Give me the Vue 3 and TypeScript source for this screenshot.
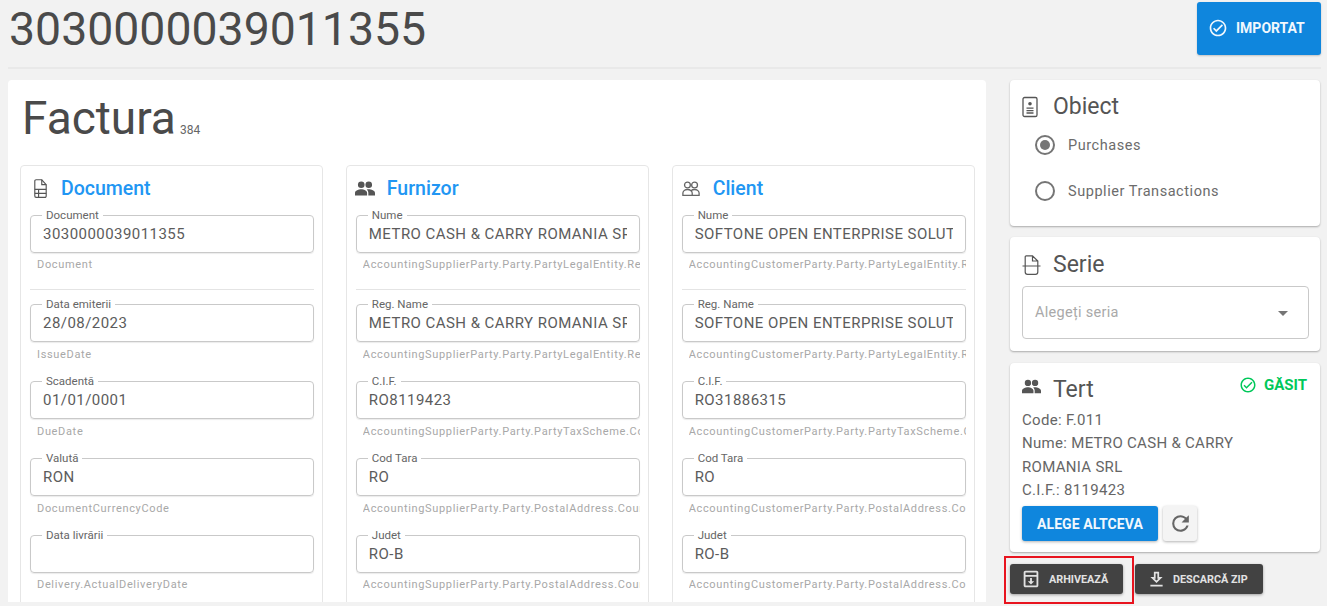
<script setup lang="ts">
interface Field { label: string; value: string; hint: string }
interface Column { title: string; icon: 'doc' | 'people' | 'peopleOutline'; fields: Field[] }

const supplier = 'METRO CASH & CARRY ROMANIA SRL'
const customer = 'SOFTONE OPEN ENTERPRISE SOLUTIONS SRL'
const columns: Column[] = [
  { title: 'Document', icon: 'doc', fields: [
    { label: 'Document', value: '3030000039011355', hint: 'Document' },
    { label: 'Data emiterii', value: '28/08/2023', hint: 'IssueDate' },
    { label: 'Scadentă', value: '01/01/0001', hint: 'DueDate' },
    { label: 'Valută', value: 'RON', hint: 'DocumentCurrencyCode' },
    { label: 'Data livrării', value: '', hint: 'Delivery.ActualDeliveryDate' },
  ] },
  { title: 'Furnizor', icon: 'people', fields: [
    { label: 'Nume', value: supplier, hint: 'AccountingSupplierParty.Party.PartyLegalEntity.RegistrationName' },
    { label: 'Reg. Name', value: supplier, hint: 'AccountingSupplierParty.Party.PartyLegalEntity.RegistrationName' },
    { label: 'C.I.F.', value: 'RO8119423', hint: 'AccountingSupplierParty.Party.PartyTaxScheme.CompanyID' },
    { label: 'Cod Tara', value: 'RO', hint: 'AccountingSupplierParty.Party.PostalAddress.Country' },
    { label: 'Judet', value: 'RO-B', hint: 'AccountingSupplierParty.Party.PostalAddress.CountrySubentity' },
  ] },
  { title: 'Client', icon: 'peopleOutline', fields: [
    { label: 'Nume', value: customer, hint: 'AccountingCustomerParty.Party.PartyLegalEntity.RegistrationName' },
    { label: 'Reg. Name', value: customer, hint: 'AccountingCustomerParty.Party.PartyLegalEntity.RegistrationName' },
    { label: 'C.I.F.', value: 'RO31886315', hint: 'AccountingCustomerParty.Party.PartyTaxScheme.CompanyID' },
    { label: 'Cod Tara', value: 'RO', hint: 'AccountingCustomerParty.Party.PostalAddress.Country' },
    { label: 'Judet', value: 'RO-B', hint: 'AccountingCustomerParty.Party.PostalAddress.CountrySubentity' },
  ] },
]
const peoplePath = 'M7.500 .5a4 4 0 1 1 0 8a4 4 0 1 1 0-8zM16.500 .5a4 4 0 1 1 0 8a4 4 0 1 1 0-8zM0 17.500v-3C0 11.500 4.500 10 7.500 10s7 1.500 7 4.500v3zM16 17.500v-3c0-1.800-.7-3.100-1.900-4.200.8-.2 1.700-.3 2.400-.3 3 0 7.500 1.500 7.500 4.500v3z'
const checkPath = 'M12 2C6.5 2 2 6.5 2 12S6.5 22 12 22 22 17.5 22 12 17.5 2 12 2M12 20C7.59 20 4 16.41 4 12S7.59 4 12 4 20 7.59 20 12 16.41 20 12 20M16.59 7.58L10 14.17L7.41 11.59L6 13L10 17L18 9L16.59 7.58Z'
</script>

<template>
  <div class="page">
    <header class="top">
      <h1 class="number">3030000039011355</h1>
      <button class="btn import">
        <svg class="import-icon" viewBox="0 0 24 24"><path fill="currentColor" :d="checkPath" /></svg>
        <span>IMPORTAT</span>
      </button>
    </header>
    <div class="layout">
      <main class="invoice">
        <div class="invoice-title"><span class="big">Factura</span><small>384</small></div>
        <div class="columns">
          <section v-for="col in columns" :key="col.title" class="col">
            <h3 class="col-head">
              <svg v-if="col.icon === 'doc'" class="ico-doc" viewBox="0 0 14 18" fill="none" stroke="#555" stroke-width="1.100">
                <path d="M1.600 16.200a1.200 1.200 0 0 0 1.200 1.200h8.400a1.200 1.200 0 0 0 1.200-1.200V5.400L8.200 .7H2.800a1.200 1.200 0 0 0-1.200 1.200z" />
                <path d="M8.200 .7v4.700h4.200M1.600 9.800h10.800M1.600 13.600h10.800M5.200 9.800v7.600" />
              </svg>
              <svg v-else-if="col.icon === 'people'" class="ico-people" viewBox="0 0 24 18"><path fill="#555" :d="peoplePath" /></svg>
              <svg v-else class="ico-people" viewBox="1 2.500 22 18.500" fill="none" stroke="#666" stroke-width="1.600">
                <circle cx="7.600" cy="7.400" r="3.600" />
                <circle cx="16.400" cy="7.400" r="3.600" />
                <path d="M2 20.400v-3c0-2.700 2.700-4.400 5.600-4.400 1.900 0 3.300.6 4.400 1.600 1.100-1 2.500-1.600 4.400-1.600 2.900 0 5.600 1.700 5.600 4.400v3zM12 14.600c1 .8 1.500 1.700 1.500 2.900v2.900" />
              </svg>
              <span>{{ col.title }}</span>
            </h3>
            <template v-for="(f, i) in col.fields" :key="f.label">
              <div class="field">
                <div class="box">
                  <label>{{ f.label }}</label>
                  <div class="value">{{ f.value }}</div>
                </div>
                <div class="hint">{{ f.hint }}</div>
              </div>
              <hr v-if="i === 0" class="sep" />
            </template>
          </section>
        </div>
      </main>
      <aside class="side">
        <section class="card obiect">
          <h2 class="card-head">
            <svg class="card-ico ico-obiect" viewBox="0 0 24 24" fill="none" stroke="#555" stroke-width="1.300">
              <rect x="5" y="2.500" width="14" height="19" rx="1.600" />
              <circle cx="12" cy="8.800" r="1.800" fill="#555" stroke="none" />
              <path d="M8.500 13.200h7M8.500 15.600h7M8.500 18h7" />
            </svg>
            Obiect
          </h2>
          <div class="radio"><span class="dot on"></span>Purchases</div>
          <div class="radio"><span class="dot"></span>Supplier Transactions</div>
        </section>
        <section class="card serie">
          <h2 class="card-head">
            <svg class="card-ico ico-serie" viewBox="0 0 19 20" fill="none" stroke="#555" stroke-width="1.200">
              <path d="M.5 11h18M3.200 11V1.800a1 1 0 0 1 1-1h6.300L15.800 6v5M10.500 .8V6h5.300M3.200 11v6a2.300 2.300 0 0 0 2.300 2.300h8a2.300 2.300 0 0 0 2.300-2.300v-6" />
            </svg>
            Serie
          </h2>
          <div class="select"><span>Alegeți seria</span><i class="caret"></i></div>
        </section>
        <section class="card tert">
          <div class="tert-top">
            <h2 class="card-head">
              <svg class="card-ico ico-tert" viewBox="0 0 24 18"><path fill="#555" :d="peoplePath" /></svg>
              Tert
            </h2>
            <div class="found">
              <svg viewBox="0 0 24 24"><path fill="currentColor" :d="checkPath" /></svg>
              GĂSIT
            </div>
          </div>
          <div class="info">
            <div>Code: F.011</div>
            <div>Nume: METRO CASH &amp; CARRY ROMANIA SRL</div>
            <div>C.I.F.: 8119423</div>
          </div>
          <div class="tert-actions">
            <button class="btn choose">ALEGE ALTCEVA</button>
            <button class="btn refresh" aria-label="Reîmprospătează">
              <svg viewBox="0 0 24 24"><path fill="#666" d="M17.65,6.35C16.2,4.9 14.21,4 12,4A8,8 0 0,0 4,12A8,8 0 0,0 12,20C15.73,20 18.84,17.45 19.73,14H17.65C16.83,16.33 14.61,18 12,18A6,6 0 0,1 6,12A6,6 0 0,1 12,6C13.66,6 15.14,6.69 16.22,7.78L13,11H20V4L17.65,6.35Z" /></svg>
            </button>
          </div>
        </section>
        <div class="bottom-actions">
          <div class="marked">
            <button class="btn dark archive">
              <svg viewBox="0 0 24 24"><path fill="currentColor" d="M6 3h12c1.100 0 2 .9 2 2v14c0 1.100-.9 2-2 2H6c-1.100 0-2-.9-2-2V5c0-1.100.9-2 2-2m0 2v2.500h12V5H6m0 4.500V19h12V9.500H6m5 1.500h2v3.500h2.500L12 18l-3.500-3.500H11V11z" /></svg>
              ARHIVEAZĂ
            </button>
          </div>
          <button class="btn dark zip">
            <svg viewBox="0 0 24 24"><path fill="currentColor" d="M13,5V11H14.170L12,13.170L9.830,11H11V5H13M15,3H9V9H5L12,16L19,9H15V3M19,18H5V20H19V18Z" /></svg>
            DESCARCĂ ZIP
          </button>
        </div>
      </aside>
    </div>
  </div>
</template>

<style>
html { background: #f2f2f2; }
body { margin: 0; background: #f2f2f2; }
</style>

<style scoped>
* { box-sizing: border-box; }
.page {
  height: 606px;
  padding: 0 6px 0 8px;
  background: #f2f2f2;
  font-family: Roboto, "Liberation Sans", sans-serif;
  color: #555;
}
.top {
  height: 69px;
  display: flex;
  justify-content: space-between;
  align-items: flex-start;
  border-bottom: 2px solid #e9e9e9;
}
.number {
  margin: 4px 0 0 1px;
  font-size: 46.400px;
  line-height: 50px;
  font-weight: 400;
  color: #4a4a4a;
}
.btn {
  border: 0;
  font-family: inherit;
  font-weight: 700;
  display: inline-flex;
  align-items: center;
  justify-content: center;
  border-radius: 3px;
  padding: 0;
}
.import {
  margin-top: 2px;
  width: 124px;
  height: 53px;
  background: #0f86dd;
  color: #f1f8fd;
  font-size: 14px;
  justify-content: flex-start;
  padding: 0 0 2px 11px;
  gap: 8px;
  box-shadow: 0 1px 2px rgba(0, 0, 0, 0.2);
}
.import-icon { width: 20px; height: 20px; }
.layout {
  margin-top: 11px;
  display: flex;
  gap: 24px;
  align-items: flex-start;
}
.invoice {
  width: 978px;
  height: 522px;
  overflow: hidden;
  flex: none;
  background: #fff;
  border-radius: 4px 4px 0 0;
  padding: 13px 11px 0 12px;
}
.invoice-title {
  display: flex;
  align-items: baseline;
  gap: 4px;
  padding-left: 2px;
  height: 72px;
}
.big {
  font-size: 46px;
  line-height: 50px;
  color: #4a4a4a;
  font-weight: 400;
}
.invoice-title small { font-size: 12px; color: #666; }
.columns {
  display: grid;
  grid-template-columns: repeat(3, minmax(0, 1fr));
  gap: 22.500px;
}
.col {
  height: 460px;
  border: 1px solid #e6e6e6;
  border-radius: 4px;
  padding: 0 8px 0 9px;
}
.col-head {
  margin: 0 0 4px -9px;
  height: 45px;
  display: flex;
  align-items: center;
  font-size: 19.500px;
  font-weight: 500;
  color: #2196f3;
}
.ico-doc { width: 15px; height: 19px; margin: 0 13px 0 12px; flex: none; }
.ico-people { width: 20px; height: 15px; margin: 0 12px 1px 8px; flex: none; }
.field { padding-bottom: 18px; }
.box {
  position: relative;
  height: 38px;
  border: 1px solid #c9c9c9;
  border-radius: 4px;
  padding: 0 12px;
  box-shadow: 0 1px 1px rgba(0, 0, 0, 0.08);
}
.box label {
  position: absolute;
  left: 11px;
  top: -7px;
  padding: 0 4px;
  background: #fff;
  font-size: 11.500px;
  line-height: 13px;
  color: #666;
}
.value {
  height: 37px;
  line-height: 37px;
  font-size: 15px;
  letter-spacing: 0.45px;
  color: #5c5c5c;
  white-space: nowrap;
  overflow: hidden;
}
.hint {
  margin: 5px 0 0 7px;
  line-height: 16px;
  font-size: 11px;
  letter-spacing: 0.66px;
  color: #a8a8a8;
  white-space: nowrap;
  overflow: hidden;
}
.field:first-of-type .hint, .field:last-of-type .hint { margin-top: 4px; }
.field:first-of-type { padding-bottom: 16px; }
.sep {
  margin: 0 0 14px;
  border: 0;
  border-top: 1px solid #e4e4e4;
}
.side {
  width: 310px;
  flex: none;
  display: flex;
  flex-direction: column;
  gap: 11px;
}
.card {
  background: #fff;
  border-radius: 4px;
  box-shadow: 0 1px 2px rgba(0, 0, 0, 0.3);
  padding: 13px 12px 0;
}
.card-head {
  margin: 0;
  height: 28px;
  display: flex;
  align-items: center;
  font-size: 23px;
  line-height: 28px;
  font-weight: 400;
  color: #555;
}
.card-ico { flex: none; }
.ico-obiect { width: 24px; height: 24px; margin: 0 11px 0 -4px; }
.ico-serie { width: 19px; height: 20px; margin: 0 12px 0 0; }
.ico-tert { width: 19px; height: 15px; margin: 0 12px 8px 0; }
.obiect { height: 146px; }
.radio {
  display: flex;
  align-items: center;
  height: 46px;
  padding-left: 13px;
  font-size: 14.500px;
  letter-spacing: 0.55px;
  color: #6c6c6c;
}
.radio:first-of-type { margin-top: 1px; }
.dot {
  width: 20px;
  height: 20px;
  border-radius: 50%;
  border: 2px solid #757575;
  margin-right: 13px;
  display: flex;
  align-items: center;
  justify-content: center;
}
.dot.on::before {
  content: "";
  width: 10px;
  height: 10px;
  border-radius: 50%;
  background: #757575;
}
.serie { height: 114px; padding-top: 14px; }
.select {
  margin-top: 7px;
  height: 53px;
  border: 1px solid #c9c9c9;
  border-radius: 4px;
  margin-right: -1px;
  padding: 0 20px 0 12px;
  display: flex;
  align-items: center;
  justify-content: space-between;
  font-size: 14.500px;
  letter-spacing: 0.3px;
  color: #a9a9a9;
}
.caret {
  width: 0;
  height: 0;
  margin-top: 2px;
  border: 5px solid transparent;
  border-top-color: #757575;
  border-bottom-width: 0;
}
.tert { height: 189px; margin-top: 1px; }
.tert-top { display: flex; justify-content: space-between; align-items: flex-start; }
.found {
  display: flex;
  align-items: center;
  gap: 7px;
  margin-right: 1px;
  font-size: 15px;
  font-weight: 700;
  color: #00c85a;
}
.found svg { width: 18px; height: 18px; }
.info {
  margin-top: 5px;
  width: 240px;
  font-size: 15px;
  line-height: 23.300px;
  letter-spacing: 0.3px;
  color: #666;
}
.tert-actions { margin-top: 4px; display: flex; gap: 5px; }
.choose {
  width: 136px;
  height: 35px;
  background: #0f86dd;
  color: #f1f8fd;
  font-size: 14px;
  letter-spacing: 0.1px;
  box-shadow: 0 1px 3px rgba(0, 0, 0, 0.3);
}
.refresh {
  width: 34px;
  height: 35px;
  background: #f4f4f4;
  box-shadow: 0 1px 3px rgba(0, 0, 0, 0.3);
}
.refresh svg { width: 25px; height: 25px; }
.bottom-actions { display: flex; gap: 12px; margin-top: 1px; }
.marked { position: relative; display: flex; }
.marked::after {
  content: "";
  position: absolute;
  left: -6px;
  right: -11px;
  top: -8px;
  bottom: -10px;
  border: 2px solid #e8141f;
  pointer-events: none;
}
.dark {
  height: 30px;
  background: #424242;
  color: #e2e2e2;
  font-size: 10.800px;
  box-shadow: 0 1px 3px rgba(0, 0, 0, 0.35);
  justify-content: flex-start;
}
.archive { width: 113px; padding-left: 10px; gap: 7px; }
.archive svg { width: 22px; height: 22px; }
.zip { width: 128px; padding-left: 11px; gap: 6px; }
.zip svg { width: 21px; height: 21px; }
</style>
